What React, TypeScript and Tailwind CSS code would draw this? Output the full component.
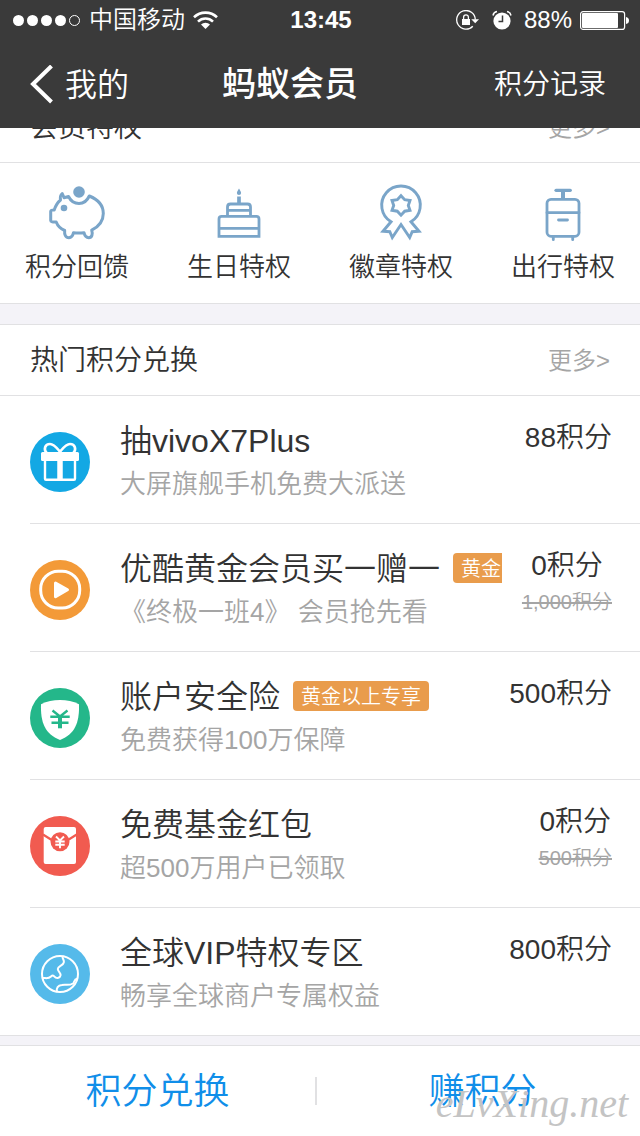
import type { ReactNode } from 'react';

const perks = [
  { label: '积分回馈', icon: <PiggyIcon /> },
  { label: '生日特权', icon: <CakeIcon /> },
  { label: '徽章特权', icon: <MedalIcon /> },
  { label: '出行特权', icon: <SuitcaseIcon /> },
];

type Reward = {
  title: string;
  description: string;
  price: string;
  oldPrice?: string;
  tag?: string;
  icon: ReactNode;
};

const rewards: Reward[] = [
  {
    title: '抽vivoX7Plus',
    description: '大屏旗舰手机免费大派送',
    price: '88积分',
    icon: <GiftIcon />,
  },
  {
    title: '优酷黄金会员买一赠一',
    description: '《终极一班4》 会员抢先看',
    price: '0积分',
    oldPrice: '1,000积分',
    tag: '黄金',
    icon: <PlayIcon />,
  },
  {
    title: '账户安全险',
    description: '免费获得100万保障',
    price: '500积分',
    tag: '黄金以上专享',
    icon: <ShieldIcon />,
  },
  {
    title: '免费基金红包',
    description: '超500万用户已领取',
    price: '0积分',
    oldPrice: '500积分',
    icon: <EnvelopeIcon />,
  },
  {
    title: '全球VIP特权专区',
    description: '畅享全球商户专属权益',
    price: '800积分',
    icon: <GlobeIcon />,
  },
];

function PiggyIcon() {
  return (
    <svg className="size-[60px]" viewBox="0 0 60 60" fill="none" stroke="#7aa5c9" strokeWidth="3" strokeLinejoin="round">
      <path d="M21.5 13.5C24 18.500 27.500 20.500 32 20.500s8-2.500 10.300-7.500C51 16.500 56.300 22.500 56.300 30.500c0 7-4.300 13-11.600 16.700C46 51 45 54.700 41.700 54.700c-2.600 0-4-2-4.700-5q-5.500.7-10.500 0c-.7 3-2 5-4.500 5-3.500 0-4.800-3.200-4.300-7.200-4.200-1.700-7-4.500-8.500-8.500-2.500 0-5.500.3-5.500-1.500v-9c0-1.500 1.500-1.500 3.500-1.500 1.300-4 3.300-7.500 6.300-10-.5-3 0-5 1.700-6.500l1.800 4.200z" />
      <circle cx="32" cy="9" r="5.800" fill="#7aa5c9" stroke="none" />
      <circle cx="17" cy="25" r="3.300" fill="#7aa5c9" stroke="none" />
    </svg>
  );
}

function CakeIcon() {
  return (
    <svg className="size-[60px]" viewBox="0 0 60 60" fill="none" stroke="#7aa5c9" strokeWidth="2.800">
      <path d="M30 5.500c1 2 2.100 3 2.100 4.500a2.100 2.100 0 0 1-4.200 0c0-1.500 1.100-2.500 2.100-4.500z" fill="#7aa5c9" stroke="none" />
      <path d="M30 13.500V20" strokeWidth="3.700" />
      <path d="M18.500 33v-9q0-3 3-3h17q3 0 3 3v9M18.500 27.300h23" />
      <path d="M10 53.300V36q0-2.700 2.700-2.700h34.600Q50 33.300 50 36v17.300zM10 45.300h40" />
    </svg>
  );
}

function MedalIcon() {
  return (
    <svg className="size-[60px]" viewBox="0 0 60 60" fill="none" stroke="#7aa5c9" strokeWidth="2.900">
      <path d="M20 38.800a19.300 19.300 0 1 1 20 0l8 9.500-6.800.4-2.500 5.800L30 41.500l-8.700 13-2.500-5.800-6.800-.4z" />
      <path d="M30 12.700l3.700 4 5.300.8-1.700 4.900 1.700 4.900-5.300.9-3.700 4-3.700-4-5.300-.9 1.700-4.900-1.700-4.900 5.300-.8z" />
    </svg>
  );
}

function SuitcaseIcon() {
  return (
    <svg className="size-[60px]" viewBox="0 0 60 60" fill="none" stroke="#7aa5c9" strokeWidth="2.800" strokeLinecap="round">
      <path d="M23 7.300h14.300" strokeWidth="3.200" />
      <path d="M30 8v8" strokeWidth="4" strokeLinecap="butt" />
      <rect x="14" y="16.300" width="32" height="37" rx="4" />
      <path d="M14 29.700h32M25.500 37h9M20.300 54v2.700M39.700 54v2.700" />
    </svg>
  );
}

function GiftIcon() {
  return (
    <svg className="size-[60px]" viewBox="0 0 60 60" fill="none" stroke="#fff">
      <circle cx="30" cy="30" r="30" fill="#13a8e4" stroke="none" />
      <rect x="11" y="20" width="38" height="9" rx="1.500" fill="#fff" stroke="none" />
      <rect x="15" y="27" width="30" height="20.700" rx="1" strokeWidth="2.400" />
      <path d="M30 28v20" strokeWidth="5.500" />
      <path d="M17 21.500c-4-4-2-9.500 3-9.500 4.500 0 7.500 5 11.500 9.500M43 21.500c4-4 2-9.500-3-9.500-4.500 0-7.500 5-11.500 9.500" strokeWidth="2.600" />
    </svg>
  );
}

function PlayIcon() {
  return (
    <svg className="size-[60px]" viewBox="0 0 60 60" fill="none">
      <circle cx="30" cy="30" r="30" fill="#f39a38" />
      <rect x="10.700" y="11.300" width="39" height="36.700" rx="17.500" stroke="#fff" strokeWidth="3" />
      <path d="M25.500 23l12 6.700-12 7z" fill="#fff" stroke="#fff" strokeWidth="3" strokeLinejoin="round" />
    </svg>
  );
}

function ShieldIcon() {
  return (
    <svg className="size-[60px]" viewBox="0 0 60 60" fill="none">
      <circle cx="30" cy="30" r="30" fill="#24b78a" />
      <path d="M30 12c7 0 13 1.300 19 4.300C49.500 35 45 46 30 52 15 46 10.500 35 11 16.300 17 13.300 23 12 30 12z" fill="#fff" />
      <path d="M22.500 22.500l7.500 6 7.500-6M20.300 28.700h19.400M21.500 34.800h17" stroke="#24b78a" strokeWidth="2.400" />
      <path d="M30 28v12.300" stroke="#24b78a" strokeWidth="4" />
    </svg>
  );
}

function EnvelopeIcon() {
  return (
    <svg className="size-[60px]" viewBox="0 0 60 60" fill="none">
      <circle cx="30" cy="30" r="30" fill="#f15b50" />
      <rect x="13.700" y="11" width="32.300" height="37" rx="2" fill="#fff" />
      <path d="M13 18.500l9.500 6M46.700 18.500l-9.500 6" stroke="#f15b50" strokeWidth="2.200" />
      <circle cx="30" cy="25.700" r="9.500" fill="#f15b50" />
      <path d="M26 20.500l4 4 4-4M25.300 25.500h9.400M25.300 28.800h9.400M30 24.500v7.700" stroke="#fff" strokeWidth="1.900" />
    </svg>
  );
}

function GlobeIcon() {
  return (
    <svg className="size-[60px]" viewBox="0 0 60 60" fill="none" stroke="#fff" strokeWidth="2" strokeLinejoin="round">
      <circle cx="30" cy="30" r="30" fill="#55baea" stroke="none" />
      <circle cx="30" cy="30" r="18" />
      <path d="M32.500 12.500c0 3 2 3.500 1.300 6-.8 3.500-6 3.500-6 6.500 0 2.500 3.200 3.500 2.700 6.500-.6 3-4.500 3-6 1.200-1.200-1.500-2-1.700-3.500-.2-2.500 2.500-4.500 1.500-8.500 1.500M27 48c-1-4 1-6.500 5-7 4-.6 7.500.8 11-1.500 1.700-1.200.3-4 4.700-5" />
    </svg>
  );
}

function SectionHeader({ title }: { title: string }) {
  return (
    <div className="flex h-[70px] shrink-0 items-center justify-between px-[30px] pt-0.5">
      <h2 className="text-[28px]">{title}</h2>
      <a href="#more" className="text-2xl text-[#a5a5a5]">更多&gt;</a>
    </div>
  );
}

function StatusBar() {
  return (
    <div className="flex h-10 items-center pl-[13px] pr-[11px] text-2xl leading-[42px]">
      <div className="flex flex-1 items-center">
        <div className="flex gap-[3px]">
          {[1, 2, 3, 4].map((dot) => (
            <span key={dot} className="size-[11px] rounded-full bg-white" />
          ))}
          <span className="size-[11px] rounded-full border border-white" />
        </div>
        <span className="ml-[9px]">中国移动</span>
        <svg className="ml-2 h-[18px] w-[25px]" viewBox="0 0 25 18" fill="none" stroke="#fff" strokeWidth="2.600">
          <path d="M1 6.300a16.500 16.500 0 0 1 23 0M5 10.600a10.800 10.800 0 0 1 15 0" />
          <path d="M12.500 18l-4.500-4.400a6.500 6.500 0 0 1 9 0z" fill="#fff" stroke="none" />
        </svg>
      </div>
      <span className="font-bold">13:45</span>
      <div className="flex flex-1 items-center justify-end">
        <svg className="h-5 w-[23px]" viewBox="0 0 23 20" fill="none" stroke="#fff" strokeWidth="1.300">
          <path d="M16.800 16.200A9.300 9.300 0 1 1 19.300 9.500" />
          <path d="M15.300 9.300H23l-3.800 4z" fill="#fff" stroke="none" />
          <rect x="6" y="9" width="8" height="6" fill="#fff" stroke="none" />
          <path d="M7.600 9.500V7.200a2.400 2.400 0 0 1 4.800 0v2.300" />
        </svg>
        <svg className="ml-[13px] h-5 w-5" viewBox="0 0 20 20" fill="none" stroke="#fff" strokeWidth="1.500">
          <circle cx="10" cy="11" r="8.600" fill="#fff" stroke="none" />
          <path d="M1 5.500A5 5 0 0 1 5 1.500M19 5.500a5 5 0 0 0-4-4" />
          <path d="M10.500 5.500v6H6.500" stroke="#3a3a3a" />
        </svg>
        <span className="ml-3">88%</span>
        <svg className="ml-2 h-[19px] w-[49px]" viewBox="0 0 49 19" fill="none">
          <rect x=".6" y=".6" width="44" height="17.800" rx="2.500" stroke="#fff" strokeWidth="1.200" />
          <rect x="2" y="2" width="36" height="15" rx="1" fill="#fff" />
          <path d="M46 6q3 .5 3 3.500T46 13z" fill="#fff" />
        </svg>
      </div>
    </div>
  );
}

function RewardRow({ reward }: { reward: Reward }) {
  return (
    <li className="ml-[30px] flex h-32 border-b border-[#e1e1e3] pr-7 last:h-[127px] last:border-b-0">
      <div className="mt-9 shrink-0">{reward.icon}</div>
      <div className="ml-[30px] mt-[22px] min-w-0 flex-1 overflow-hidden whitespace-nowrap">
        <div className="flex h-11 items-center">
          <h3 className="pt-0.5 text-[32px] leading-[44px]">{reward.title}</h3>
          {reward.tag && (
            <span className="ml-[13px] h-[30px] rounded-sm bg-[#e99c4c] px-2 text-xl leading-8 text-white">
              {reward.tag}
            </span>
          )}
        </div>
        <p className="text-[26px] leading-[44px] text-[#a5a5a5]">{reward.description}</p>
      </div>
      <div className="ml-5 mt-6 flex shrink-0 flex-col items-center">
        <span className="text-[28px] leading-9">{reward.price}</span>
        {reward.oldPrice && (
          <del className="text-xl leading-9 text-[#a5a5a5]">{reward.oldPrice}</del>
        )}
      </div>
    </li>
  );
}

export default function App() {
  return (
    <div className="min-h-screen bg-white font-['Liberation_Sans','Noto_Sans_CJK_SC',sans-serif] font-[350] text-[#333]">
      <header className="bg-[#3a3a3a] text-white">
        <StatusBar />
        <nav className="flex h-[88px] items-center pl-[30px] pr-[34px] pt-0.5">
          <button className="flex w-48 items-center text-[32px]">
            <svg className="mr-3 h-10 w-[23px]" viewBox="0 0 23 40" fill="none" stroke="#fff" strokeWidth="4">
              <path d="M21.500 1L3 19l18.500 18" />
            </svg>
            我的
          </button>
          <h1 className="pb-2 font-['Noto_Sans_CJK_SC',sans-serif] text-[34px] font-medium">蚂蚁会员</h1>
          <a href="#history" className="ml-auto text-[28px]">积分记录</a>
        </nav>
      </header>

      <main>
        {/* Scrolled halfway under the header */}
        <div className="flex h-[35px] flex-col justify-end overflow-hidden border-b border-[#e1e1e3]">
          <SectionHeader title="会员特权" />
        </div>
        <div className="flex justify-between border-b border-[#e1e1e3] px-[25px] pb-4 pt-5">
          {perks.map((perk) => (
            <a key={perk.label} href="#perk" className="flex flex-col items-center gap-1 text-[26px] leading-10">
              {perk.icon}
              {perk.label}
            </a>
          ))}
        </div>

        <div className="h-5 bg-[#f4f3f8]" />

        <section className="border-y border-[#e1e1e3]">
          <div className="border-b border-[#e1e1e3]">
            <SectionHeader title="热门积分兑换" />
          </div>
          <ul>
            {rewards.map((reward) => (
              <RewardRow key={reward.title} reward={reward} />
            ))}
          </ul>
        </section>

        <div className="h-[9px] bg-[#f4f3f8]" />
      </main>

      <footer className="relative flex h-[91px] items-center border-t border-[#e1e1e3] text-4xl text-[#108ee9]">
        <button className="h-full flex-1 pt-0.5">积分兑换</button>
        <span className="h-7 w-0.5 bg-[#e1e1e3]" />
        <button className="h-full flex-1 pl-2 pt-0.5">赚积分</button>
        <span className="pointer-events-none absolute bottom-2 right-3 font-['Liberation_Serif',serif] text-[40px] italic leading-[48px] text-[#c4c4c4]">
          eLvXing.net
        </span>
      </footer>
    </div>
  );
}
